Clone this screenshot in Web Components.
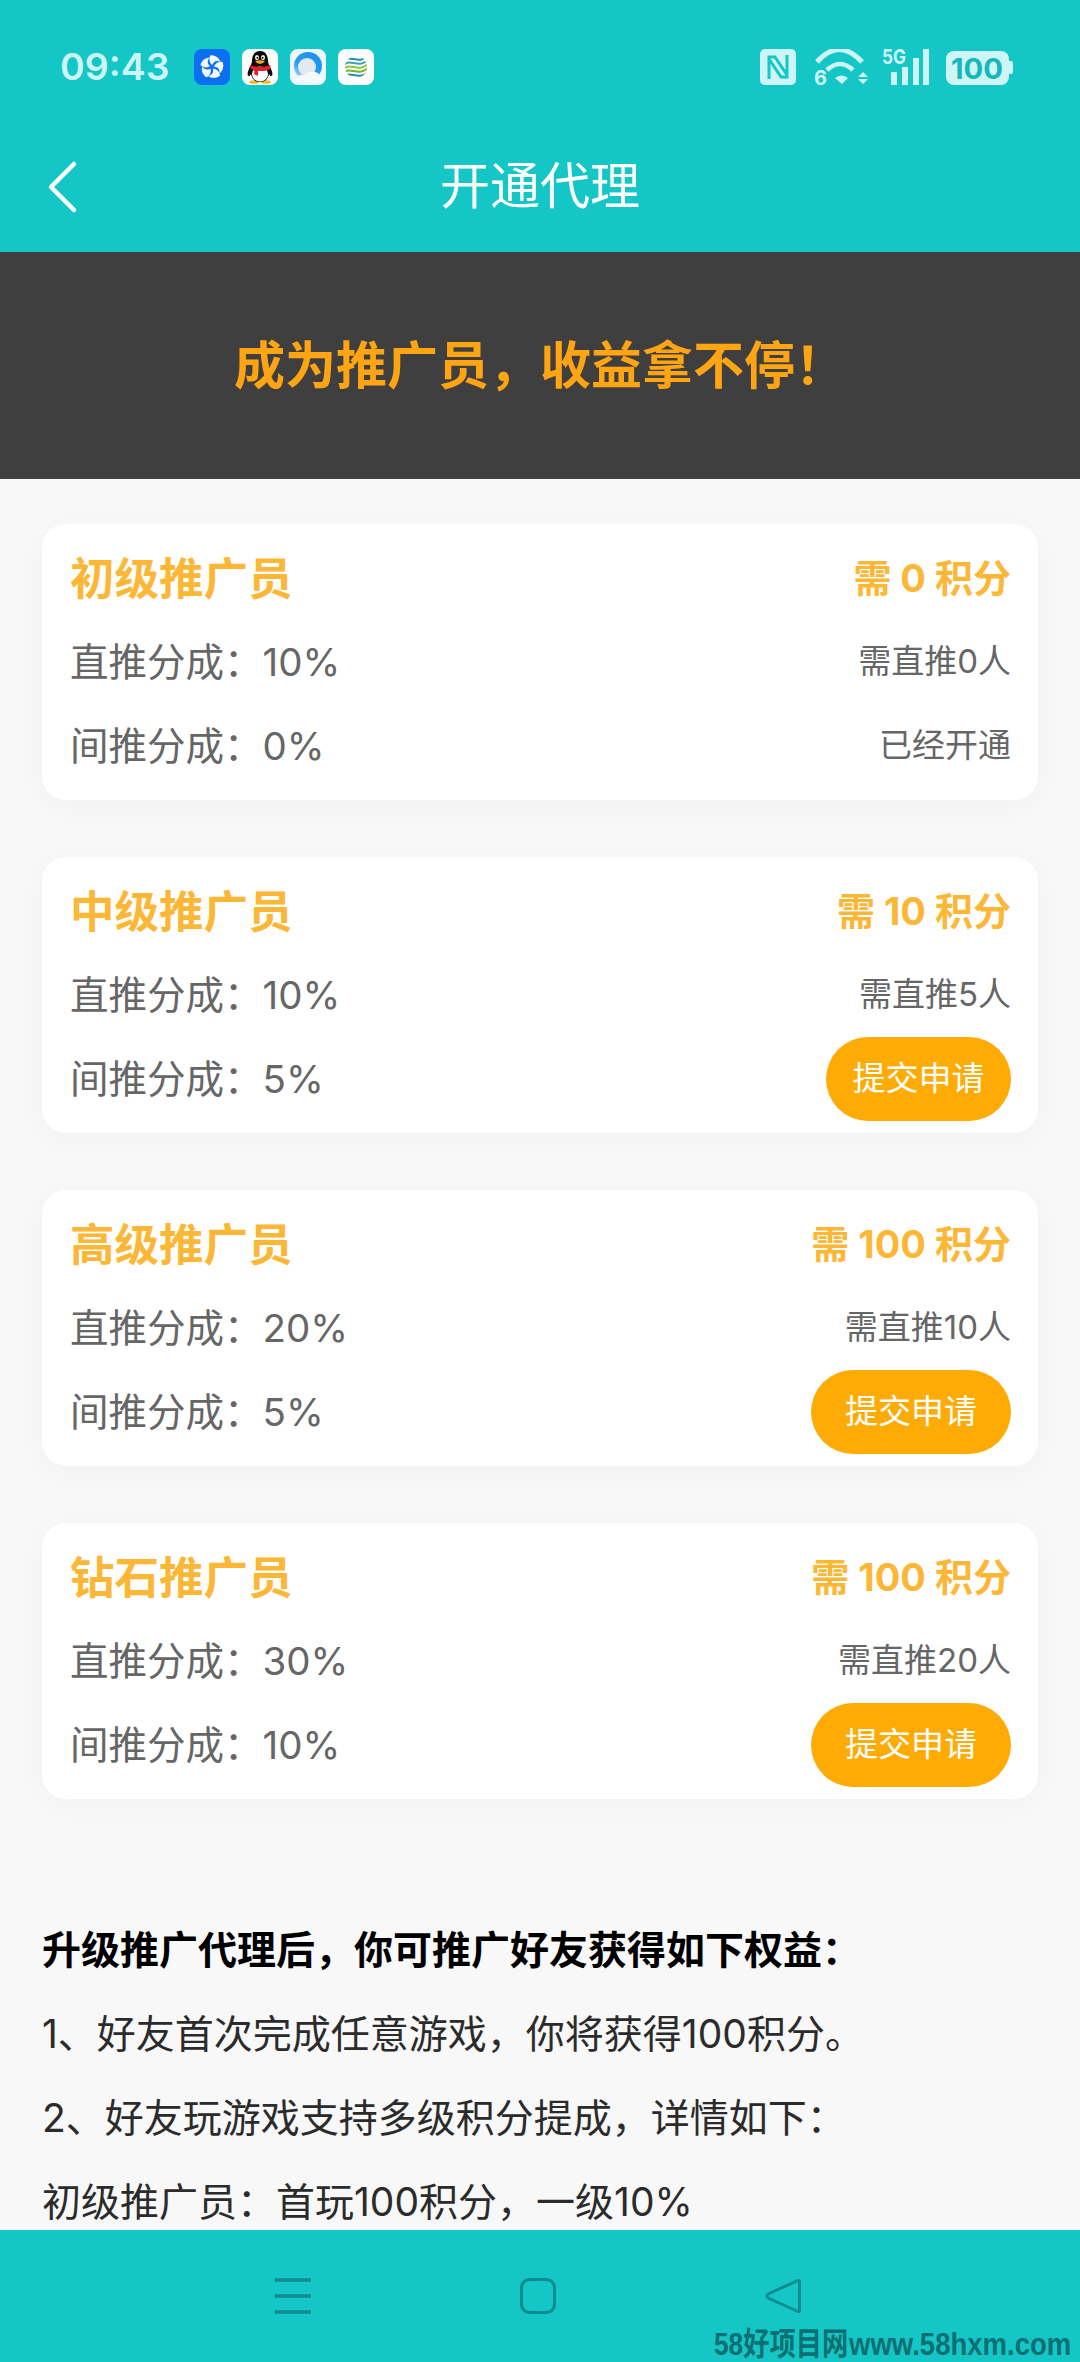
<!DOCTYPE html>
<html lang="zh">
<head>
<meta charset="utf-8">
<title>开通代理</title>
<style>
    html, body { margin: 0; padding: 0; background: #f8f8f8; }
    body { font-family: "Inter", "Noto Sans CJK SC", sans-serif; }
</style>
</head>
<body>
<app-screen>
    <status-bar slot="top"></status-bar>
    <nav-header slot="top">开通代理</nav-header>
    <promo-banner slot="top">成为推广员，收益拿不停！</promo-banner>

    <tier-card>
        <span slot="name">初级推广员</span>
        <span slot="cost">需 0 积分</span>
        <span slot="direct">直推分成：10%</span>
        <span slot="need">需直推0人</span>
        <span slot="indirect">间推分成：0%</span>
        <span slot="action" class="done">已经开通</span>
    </tier-card>
    <tier-card>
        <span slot="name">中级推广员</span>
        <span slot="cost">需 10 积分</span>
        <span slot="direct">直推分成：10%</span>
        <span slot="need">需直推5人</span>
        <span slot="indirect">间推分成：5%</span>
        <apply-button slot="action" pad="26.5">提交申请</apply-button>
    </tier-card>
    <tier-card>
        <span slot="name">高级推广员</span>
        <span slot="cost">需 100 积分</span>
        <span slot="direct">直推分成：20%</span>
        <span slot="need">需直推10人</span>
        <span slot="indirect">间推分成：5%</span>
        <apply-button slot="action" pad="34">提交申请</apply-button>
    </tier-card>
    <tier-card>
        <span slot="name">钻石推广员</span>
        <span slot="cost">需 100 积分</span>
        <span slot="direct">直推分成：30%</span>
        <span slot="need">需直推20人</span>
        <span slot="indirect">间推分成：10%</span>
        <apply-button slot="action" pad="34">提交申请</apply-button>
    </tier-card>

    <rule-notes>
        <b>升级推广代理后，你可推广好友获得如下权益：</b>
        <div>1、好友首次完成任意游戏，你将获得100积分。</div>
        <div>2、好友玩游戏支持多级积分提成，详情如下：</div>
        <div>初级推广员：首玩100积分，一级10%</div>
    </rule-notes>

    <bottom-nav slot="bottom"></bottom-nav>
</app-screen>

<script>
class AppScreen extends HTMLElement {
    constructor() {
        super();
        this.attachShadow({ mode: 'open' });
        this.shadowRoot.innerHTML = `
            <style>
                :host { display: flex; flex-direction: column; width: 1080px; height: 2362px; overflow: hidden; background: #f8f8f8; }
                .scroll { flex: 1; min-height: 0; overflow: hidden; padding: 45px 42px 0; display: flex; flex-direction: column; gap: 57px; }
            </style>
            <slot name="top"></slot>
            <div class="scroll"><slot></slot></div>
            <slot name="bottom"></slot>
        `;
    }
}
customElements.define('app-screen', AppScreen);

class StatusBar extends HTMLElement {
    constructor() {
        super();
        this.attachShadow({ mode: 'open' });
        const blade = 'M18.5 15.5 C15 13 13.5 8 16 3.5 C21 3 26.5 6 28.5 11.5 C24 9.5 20 11 18.5 15.5Z';
        const blades = [0, 72, 144, 216, 288].map(a => `<path d="${blade}" transform="rotate(${a} 18 18)"/>`).join('');
        this.shadowRoot.innerHTML = `
            <style>
                :host { display: flex; justify-content: space-between; align-items: flex-start; height: 120px; box-sizing: border-box;
                        padding: 49px 67px 0 60px; background: #15c6c6; color: #cdf5f5; }
                .left, .right { display: flex; align-items: flex-start; height: 36px; }
                .time { font-size: 37.5px; font-weight: 600; width: 134px; line-height: 36px; }
                .apps { display: flex; gap: 12px; }
                svg { display: block; }
                .right svg text { font-family: "Inter", sans-serif; font-weight: 700; }
            </style>
            <div class="left">
                <span class="time">09:43</span>
                <div class="apps">
                    <svg width="36" height="36" viewBox="0 0 36 36">
                        <rect width="36" height="36" rx="8" fill="#0b6ff2"/>
                        <g fill="#f2f8ff" transform="translate(18 18) scale(0.8) translate(-18 -18)">${blades}</g>
                    </svg>
                    <svg width="36" height="36" viewBox="0 0 36 36">
                        <rect width="36" height="36" rx="8" fill="#fff"/>
                        <ellipse cx="12" cy="33" rx="5" ry="1.8" fill="#f5b81e"/>
                        <ellipse cx="24" cy="33" rx="5" ry="1.8" fill="#f5b81e"/>
                        <path d="M18 2 C12 2 10 7 10 12 C10 15 8 17 6.5 21 C5 25 5.5 27 7 27 C8 27 9 25 9 25 C10 30 13 33 18 33 C23 33 26 30 27 25 C27 25 28 27 29 27 C30.5 27 31 25 29.5 21 C28 17 26 15 26 12 C26 7 24 2 18 2Z" fill="#0b0b0b"/>
                        <ellipse cx="18" cy="25" rx="8" ry="7.5" fill="#fff"/>
                        <ellipse cx="15" cy="8.5" rx="2" ry="2.6" fill="#fff"/>
                        <ellipse cx="21" cy="8.5" rx="2" ry="2.6" fill="#fff"/>
                        <circle cx="15.4" cy="8.8" r="1" fill="#000"/>
                        <circle cx="20.6" cy="8.8" r="1" fill="#000"/>
                        <path d="M13 12 Q18 10.5 23 12 Q21 15 18 15 Q15 15 13 12Z" fill="#f0a91a"/>
                        <path d="M7.5 16 Q18 20 28.5 16 L28 20 Q24 22 22 22 L16 22 L16 27 L12 25 L12.5 22 Q9 21 7.5 16Z" fill="#e0202a"/>
                    </svg>
                    <svg width="36" height="36" viewBox="0 0 36 36">
                        <defs>
                            <linearGradient id="ring" x1="0.8" y1="0" x2="0.1" y2="1">
                                <stop offset="0" stop-color="#1a8fee"/>
                                <stop offset="0.6" stop-color="#2f9df0"/>
                                <stop offset="1" stop-color="#bfe0f8"/>
                            </linearGradient>
                        </defs>
                        <rect width="36" height="36" rx="8" fill="#eef6fc"/>
                        <circle cx="18" cy="17" r="14" fill="url(#ring)"/>
                        <circle cx="17" cy="18" r="9" fill="#e3e9f0"/>
                        <path d="M5 33 C5 27 10 25 15 26 C19 21 29 22 31 28 C32 30 31 33 29 33Z" fill="#f6faff"/>
                    </svg>
                    <svg width="36" height="36" viewBox="0 0 36 36">
                        <defs>
                            <clipPath id="cmcc"><circle cx="18" cy="18" r="11"/></clipPath>
                        </defs>
                        <rect width="36" height="36" rx="8" fill="#fff"/>
                        <g fill="none" stroke-width="2" clip-path="url(#cmcc)">
                            <path d="M6 12 C12 5 20 16 30 7" stroke="#2a8db0"/>
                            <path d="M6 16 C12 9 20 20 30 11" stroke="#3f9fb8"/>
                            <path d="M6 20 C12 13 20 24 30 15" stroke="#8cc63f"/>
                            <path d="M6 24 C12 17 20 28 30 19" stroke="#6fb52c"/>
                            <path d="M6 28 C12 21 20 32 30 23" stroke="#2a8db0"/>
                        </g>
                    </svg>
                </div>
            </div>
            <div class="right">
                <svg width="36" height="36" viewBox="0 0 36 36" style="margin-right:18px">
                    <rect width="36" height="36" rx="5" fill="#cdf5f5"/>
                    <path d="M9 30 V8 H15 L27 26 M27 6 V28 H21 L9 10" fill="none" stroke="#15c6c6" stroke-width="3"/>
                </svg>
                <svg width="54" height="42" viewBox="0 0 54 42" style="margin-right:14px; margin-bottom:-6px">
                    <g fill="none" stroke="#cdf5f5">
                        <path d="M3 13 Q25 -12 48 13" stroke-width="5"/>
                        <path d="M13 21 Q26 9 39 21" stroke-width="4.5"/>
                    </g>
                    <path d="M21 29 Q28 24 34 29 L28 35Z" fill="#cdf5f5"/>
                    <text x="0" y="36" font-size="20" fill="#cdf5f5">6</text>
                    <path d="M44 28 L49 23 L54 28Z M44 30 L54 30 L49 35Z" fill="#cdf5f5"/>
                </svg>
                <svg width="50" height="42" viewBox="0 -6 50 42" style="margin-right:14px; margin-top:-6px">
                    <text x="0" y="15" font-size="20" textLength="24" lengthAdjust="spacingAndGlyphs" fill="#cdf5f5">5G</text>
                    <rect x="9" y="23" width="6" height="13" fill="#cdf5f5"/>
                    <rect x="20" y="18" width="6" height="18" fill="#cdf5f5"/>
                    <rect x="31" y="9" width="6" height="27" fill="#cdf5f5"/>
                    <rect x="41" y="0" width="6" height="36" fill="#cdf5f5"/>
                </svg>
                <svg width="67" height="36" viewBox="0 0 67 36">
                    <rect x="0" y="2" width="63" height="34" rx="8" fill="#cdf5f5"/>
                    <path d="M63 12 h2 a2 2 0 0 1 2 2 v9 a2 2 0 0 1 -2 2 h-2Z" fill="#cdf5f5"/>
                    <text x="31" y="29.5" font-size="29" text-anchor="middle" textLength="52" lengthAdjust="spacingAndGlyphs" fill="#14b7ba">100</text>
                </svg>
            </div>
        `;
    }
}
customElements.define('status-bar', StatusBar);

class NavHeader extends HTMLElement {
    constructor() {
        super();
        this.attachShadow({ mode: 'open' });
        this.shadowRoot.innerHTML = `
            <style>
                :host { display: flex; position: relative; align-items: center; justify-content: center; height: 132px;
                        background: #15c6c6; color: #fff; font-size: 50px; line-height: 68px; }
                .back { position: absolute; left: 46px; top: 40px; }
            </style>
            <svg class="back" width="32" height="54" viewBox="0 0 32 54">
                <path d="M28 4 L5 27 L28 50" fill="none" stroke="#fff" stroke-width="4.5" stroke-linecap="round" stroke-linejoin="round"/>
            </svg>
            <span><slot></slot></span>
        `;
    }
}
customElements.define('nav-header', NavHeader);

class PromoBanner extends HTMLElement {
    constructor() {
        super();
        this.attachShadow({ mode: 'open' });
        this.shadowRoot.innerHTML = `
            <style>
                :host { display: flex; align-items: center; justify-content: center; height: 227px; box-sizing: border-box; padding-bottom: 7px; background: #3f3f3f;
                        color: #ffa514; font-size: 51px; font-weight: 700; }
            </style>
            <slot></slot>
        `;
    }
}
customElements.define('promo-banner', PromoBanner);

class TierCard extends HTMLElement {
    constructor() {
        super();
        this.attachShadow({ mode: 'open' });
        this.shadowRoot.innerHTML = `
            <style>
                :host { display: block; flex: none; background: #fff; border-radius: 24px; box-shadow: 0 6px 30px rgba(0,0,0,0.03);
                        padding: 12px 27px 12px 28px; box-sizing: border-box; height: 276px; }
                .row { display: flex; justify-content: space-between; align-items: center; height: 84px; color: #666; }
                .row > span { padding-bottom: 6px; }
                .name { font-size: 44.5px; font-weight: 700; color: #fbb735; }
                .cost { font-size: 38px; font-weight: 700; color: #fbb735; }
                .main { font-size: 38.5px; }
                .side { font-size: 33px; }
                ::slotted(.done) { font-size: 33px; padding-bottom: 6px; }
            </style>
            <div class="row"><span class="name"><slot name="name"></slot></span><span class="cost"><slot name="cost"></slot></span></div>
            <div class="row"><span class="main"><slot name="direct"></slot></span><span class="side"><slot name="need"></slot></span></div>
            <div class="row"><span class="main"><slot name="indirect"></slot></span><slot name="action"></slot></div>
        `;
    }
}
customElements.define('tier-card', TierCard);

class ApplyButton extends HTMLElement {
    constructor() {
        super();
        this.attachShadow({ mode: 'open' });
        this.shadowRoot.innerHTML = `
            <style>
                :host { display: flex; align-items: center; height: 84px; box-sizing: border-box; padding-bottom: 6px; border-radius: 42px; background: #ffab05; color: #fff; font-size: 33px; cursor: pointer; }
            </style>
            <slot></slot>
        `;
    }

    connectedCallback() {
        const pad = this.getAttribute('pad') || 30;
        this.style.paddingLeft = pad + 'px';
        this.style.paddingRight = pad + 'px';
    }
}
customElements.define('apply-button', ApplyButton);

class RuleNotes extends HTMLElement {
    constructor() {
        super();
        this.attachShadow({ mode: 'open' });
        this.shadowRoot.innerHTML = `
            <style>
                :host { display: block; flex: none; margin-top: 52px; color: #2b2b2b; font-size: 39px; line-height: 84px; white-space: nowrap; }
                ::slotted(b) { display: block; color: #000; font-weight: 700; }
            </style>
            <slot></slot>
        `;
    }
}
customElements.define('rule-notes', RuleNotes);

class BottomNav extends HTMLElement {
    constructor() {
        super();
        this.attachShadow({ mode: 'open' });
        this.shadowRoot.innerHTML = `
            <style>
                :host { display: flex; position: relative; justify-content: center; gap: 209px; height: 132px; box-sizing: border-box; padding: 48px 4px 0 0; background: #15c6c6; }
                svg { display: block; }
                .mark { position: absolute; right: 0; bottom: 0; display: flex; color: #0d6f72; font-family: "Liberation Sans", "Noto Sans CJK SC", sans-serif; font-weight: 700; font-size: 32px; line-height: 36px; white-space: nowrap; }
                .mark span { display: block; transform-origin: left center; }
                .cn { width: 135px; transform: scaleX(0.82); }
                .en { width: 231px; transform: scaleX(0.86); }
            </style>
            <svg width="36" height="36" viewBox="0 0 36 36">
                <path d="M0 2 H36 M0 18 H36 M0 34 H36" stroke="#0f8c90" stroke-width="3.5"/>
            </svg>
            <svg width="36" height="36" viewBox="0 0 36 36">
                <rect x="1.5" y="1.5" width="33" height="33" rx="8" fill="none" stroke="#0f8c90" stroke-width="3"/>
            </svg>
            <svg width="36" height="36" viewBox="0 0 36 36">
                <path d="M33 2.5 Q34.5 2 34.5 4 V32 Q34.5 34 33 33.5 L3 20 Q1 18 3 16 Z" fill="none" stroke="#0f8c90" stroke-width="3" stroke-linejoin="round"/>
            </svg>
            <div class="mark"><span class="cn">58好项目网</span><span class="en">www.58hxm.com</span></div>
        `;
    }
}
customElements.define('bottom-nav', BottomNav);
</script>
</body>
</html>
